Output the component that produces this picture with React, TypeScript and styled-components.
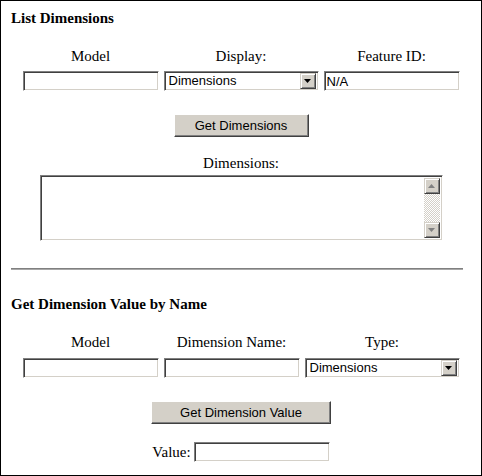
import React from 'react';
import styled, { createGlobalStyle } from 'styled-components';

const GlobalStyle = createGlobalStyle`
  html, body {
    margin: 0;
    padding: 0;
    background: #fff;
  }
  body {
    font-family: "Liberation Serif", "Times New Roman", serif;
    font-size: 15px;
    color: #000;
  }
`;

const Page = styled.div`
  width: 482px;
  height: 476px;
  box-sizing: border-box;
  border: 1px solid #000;
  display: flex;
  flex-direction: column;
  align-items: center;
`;

const SectionTitle = styled.h3<{ $mt: number }>`
  align-self: stretch;
  margin: ${p => p.$mt}px 0 0;
  padding-left: 10px;
  font-size: 15px;
  font-weight: bold;
  line-height: 17px;
`;

const FieldGrid = styled.div<{ $cols: string; $mt: number; $rowGap: number }>`
  display: grid;
  grid-template-columns: ${p => p.$cols};
  column-gap: 5px;
  row-gap: ${p => p.$rowGap}px;
  margin-top: ${p => p.$mt}px;
`;

const FieldLabel = styled.label`
  text-align: center;
  line-height: 17px;
  white-space: nowrap;
`;

const sunken = `
  box-sizing: border-box;
  border: 1px solid;
  border-color: #808080 #ffffff #ffffff #808080;
  box-shadow: inset 1px 1px 0 #404040, inset -1px -1px 0 #d4d0c8;
  background: #fff;
`;

const TextInput = styled.input<{ $width?: number }>`
  ${sunken}
  width: ${p => (p.$width ? `${p.$width}px` : '100%')};
  height: 20px;
  margin: 0;
  padding: 0 2px;
  font-family: "Liberation Sans", Arial, sans-serif;
  font-size: 13px;
  color: #000;
  outline: none;
`;

const SelectFrame = styled.div`
  ${sunken}
  display: flex;
  align-items: center;
  height: 20px;
  padding: 2px;
`;

const NativeSelect = styled.select`
  flex: 1;
  min-width: 0;
  height: 16px;
  margin: 0;
  padding: 0 0 0 2px;
  border: none;
  background: transparent;
  appearance: none;
  font-family: "Liberation Sans", Arial, sans-serif;
  font-size: 13px;
  line-height: 16px;
  color: #000;
  outline: none;
`;

const raised = `
  box-sizing: border-box;
  background: #d4d0c8;
  border: 1px solid;
  border-color: #d4d0c8 #404040 #404040 #d4d0c8;
  box-shadow: inset 1px 1px 0 #ffffff, inset -1px -1px 0 #808080;
`;

const ArrowButton = styled.span`
  ${raised}
  display: flex;
  align-items: center;
  justify-content: center;
  width: 16px;
  height: 16px;
  flex: none;
`;

const PushButton = styled.button<{ $width: number; $mt: number }>`
  ${raised}
  border-color: #ffffff #404040 #404040 #ffffff;
  box-shadow: inset -1px -1px 0 #808080;
  width: ${p => p.$width}px;
  height: 23px;
  margin-top: ${p => p.$mt}px;
  padding: 0;
  font-family: "Liberation Sans", Arial, sans-serif;
  font-size: 13px;
  color: #000;
  cursor: pointer;
`;

const Caption = styled.label<{ $mt: number }>`
  margin-top: ${p => p.$mt}px;
  line-height: 17px;
`;

const TextFrame = styled.div<{ $mt: number }>`
  ${sunken}
  display: flex;
  width: 403px;
  height: 66px;
  margin-top: ${p => p.$mt}px;
  padding: 2px;
`;

const TextArea = styled.textarea`
  flex: 1;
  margin: 0;
  padding: 2px;
  border: none;
  resize: none;
  overflow: hidden;
  outline: none;
  font-family: "Liberation Sans", Arial, sans-serif;
  font-size: 13px;
`;

const ScrollTrack = styled.div`
  display: flex;
  flex-direction: column;
  width: 16px;
  flex: none;
`;

const ScrollGutter = styled.div`
  flex: 1;
  background: repeating-conic-gradient(#d4d0c8 0 25%, #ffffff 0 50%) 0 0 / 2px 2px;
`;

const Rule = styled.div<{ $mt: number }>`
  align-self: stretch;
  margin: ${p => p.$mt}px 18px 0 10px;
  border-top: 1px solid #808080;
  border-bottom: 1px solid #a8a8a8;
`;

const ValueRow = styled.div<{ $mt: number }>`
  display: flex;
  align-items: center;
  gap: 3px;
  margin-top: ${p => p.$mt}px;
  height: 20px;
`;

const Triangle: React.FC<{ up?: boolean; color: string }> = ({ up, color }) => (
  <svg width="7" height="4" viewBox="0 0 7 4">
    <polygon points={up ? '3.5,0 7,4 0,4' : '0,0 7,0 3.5,4'} fill={color} />
  </svg>
);

const Dropdown: React.FC<{ value: string }> = ({ value }) => (
  <SelectFrame>
    <NativeSelect defaultValue={value}>
      <option>Dimensions</option>
      <option>Parameters</option>
    </NativeSelect>
    <ArrowButton>
      <Triangle color="#000" />
    </ArrowButton>
  </SelectFrame>
);

const App: React.FC = () => (
  <>
    <GlobalStyle />
    <Page>
      <SectionTitle $mt={9}>List Dimensions</SectionTitle>
      <FieldGrid $cols="136px 155px 136px" $mt={21} $rowGap={6}>
        <FieldLabel>Model</FieldLabel>
        <FieldLabel>Display:</FieldLabel>
        <FieldLabel>Feature ID:</FieldLabel>
        <TextInput type="text" />
        <Dropdown value="Dimensions" />
        <TextInput type="text" defaultValue="N/A" />
      </FieldGrid>
      <PushButton $width={135} $mt={23}>Get Dimensions</PushButton>
      <Caption $mt={18}>Dimensions:</Caption>
      <TextFrame $mt={3}>
        <TextArea />
        <ScrollTrack>
          <ArrowButton>
            <Triangle up color="#808080" />
          </ArrowButton>
          <ScrollGutter />
          <ArrowButton>
            <Triangle color="#808080" />
          </ArrowButton>
        </ScrollTrack>
      </TextFrame>
      <Rule $mt={27} />
      <SectionTitle $mt={26}>Get Dimension Value by Name</SectionTitle>
      <FieldGrid $cols="136px 136px 155px" $mt={21} $rowGap={7}>
        <FieldLabel>Model</FieldLabel>
        <FieldLabel>Dimension Name:</FieldLabel>
        <FieldLabel>Type:</FieldLabel>
        <TextInput type="text" />
        <TextInput type="text" />
        <Dropdown value="Dimensions" />
      </FieldGrid>
      <PushButton $width={180} $mt={23}>Get Dimension Value</PushButton>
      <ValueRow $mt={18}>
        <FieldLabel>Value:</FieldLabel>
        <TextInput type="text" $width={136} />
      </ValueRow>
    </Page>
  </>
);

export default App;
